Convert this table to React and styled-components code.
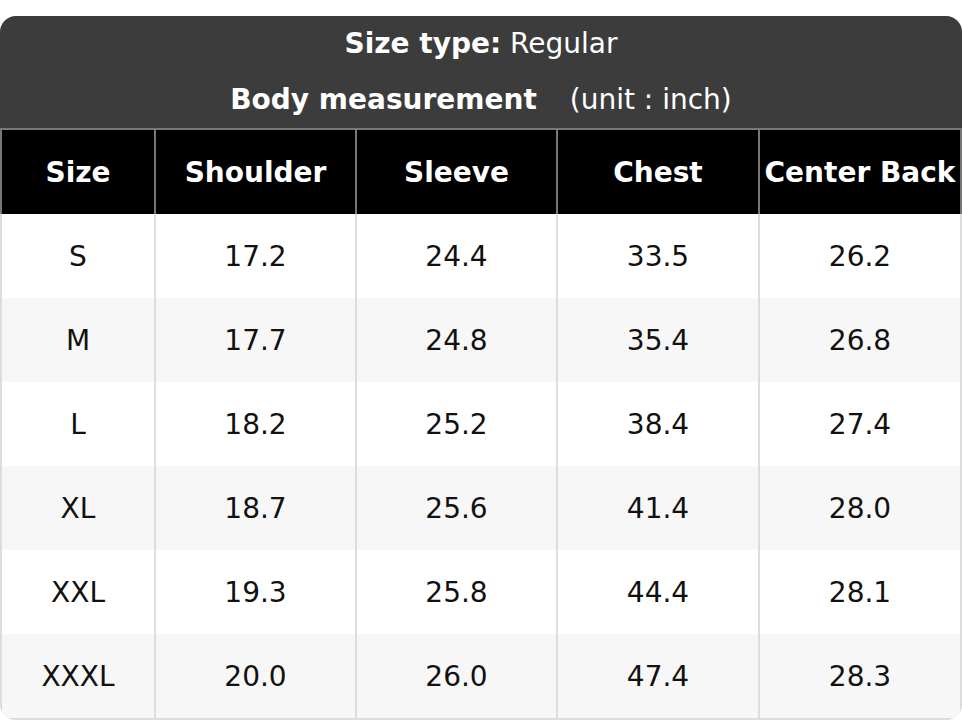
import React from "react";
import styled, { createGlobalStyle } from "styled-components";

const GlobalStyle = createGlobalStyle`
	html, body {
		margin: 0;
		padding: 0;
		background: #ffffff;
	}
	body {
		font-family: "DejaVu Sans", Verdana, sans-serif;
	}
`;

const Page = styled.div`
	padding-top: 16px;
	width: 962px;
`;

const Card = styled.div`
	border-radius: 16px;
	overflow: hidden;
	background: #dddddd;
`;

const TitleBar = styled.div`
	background: #3c3c3c;
	color: #ffffff;
	display: flex;
	flex-direction: column;
`;

const TitleLine = styled.div`
	height: 56px;
	display: flex;
	align-items: center;
	justify-content: center;
	font-size: 28px;
	line-height: 1;
	white-space: pre;
`;

const Strong = styled.span`
	font-weight: bold;
`;

const Unit = styled.span`
	margin-left: 33px;
`;

const Grid = styled.div`
	display: grid;
	grid-template-columns: 152px 199px 199px 200px 1fr;
	column-gap: 2px;
	padding: ${(p) => (p.$head ? "2px 2px 0" : "0 2px 2px")};
	background: ${(p) => (p.$head ? "#777777" : "#dddddd")};
`;

const Cell = styled.div`
	height: 84px;
	display: flex;
	align-items: center;
	justify-content: center;
	font-size: 28px;
	white-space: nowrap;
	background: ${(p) => (p.$head ? "#000000" : p.$odd ? "#f7f7f7" : "#ffffff")};
	color: ${(p) => (p.$head ? "#ffffff" : "#111111")};
	font-weight: ${(p) => (p.$head ? "bold" : "normal")};
`;

const columns = ["Size", "Shoulder", "Sleeve", "Chest", "Center Back"];

const rows = [
	["S", "17.2", "24.4", "33.5", "26.2"],
	["M", "17.7", "24.8", "35.4", "26.8"],
	["L", "18.2", "25.2", "38.4", "27.4"],
	["XL", "18.7", "25.6", "41.4", "28.0"],
	["XXL", "19.3", "25.8", "44.4", "28.1"],
	["XXXL", "20.0", "26.0", "47.4", "28.3"],
];

export default function App() {
	return (
		<Page>
			<GlobalStyle />
			<Card>
				<TitleBar>
					<TitleLine>
						<Strong>Size type:</Strong> Regular
					</TitleLine>
					<TitleLine>
						<Strong>Body measurement</Strong>
						<Unit>(unit : inch)</Unit>
					</TitleLine>
				</TitleBar>
				<Grid $head>
					{columns.map((c) => (
						<Cell key={c} $head>{c}</Cell>
					))}
				</Grid>
				<Grid>
					{rows.map((r, i) =>
						r.map((v, j) => (
							<Cell key={i + "-" + j} $odd={i % 2 === 1}>{v}</Cell>
						))
					)}
				</Grid>
			</Card>
		</Page>
	);
}
